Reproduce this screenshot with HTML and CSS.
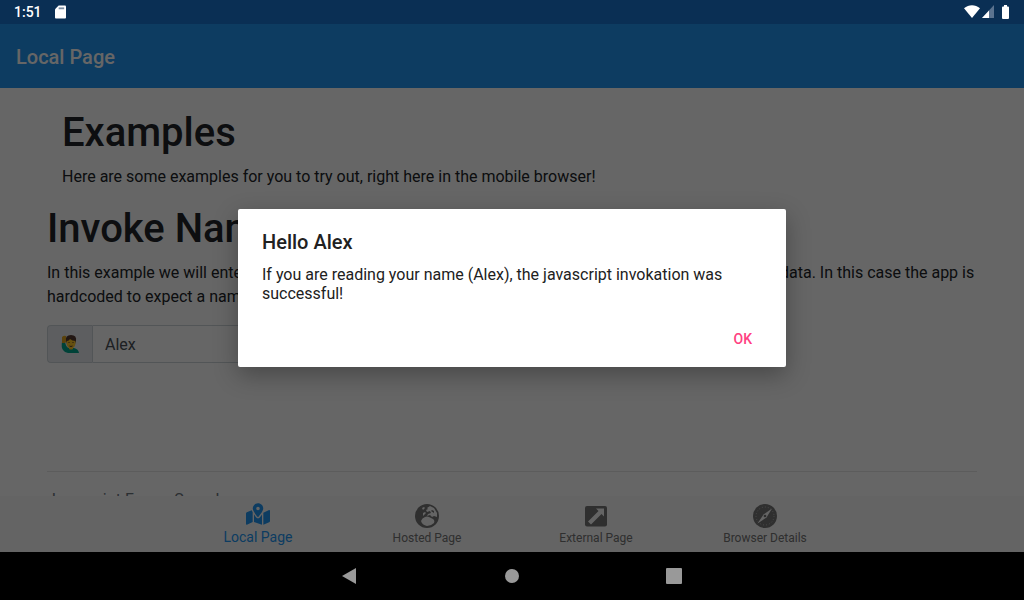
FILE: index.html
```
<!DOCTYPE html>
<html lang="en">
<head>
<meta charset="utf-8">
<meta name="viewport" content="width=device-width, initial-scale=1">
<title>Local Page</title>
<link rel="stylesheet" href="styles.css">
</head>
<body>
<div class="screen">
  <div class="status-bar">
    <span class="clock">1:51</span>
    <svg class="sd-card" viewBox="0 0 12 14" aria-hidden="true"><path fill="#fff" d="M4 0h7q1 0 1 1v12q0 1-1 1H1q-1 0-1-1V4z"/><path fill="#7b8da3" d="M4 2h6v2H4z"/></svg>
    <div class="signals">
      <svg class="wifi" viewBox="0 0 16 13" aria-hidden="true"><path fill="#fff" d="M0 3.2C4.8-.8 11.2-.8 16 3.2L8 13z"/></svg>
      <svg class="cell" viewBox="0 0 12 13" aria-hidden="true"><path fill="#5b738f" d="M12 0v13H0z"/><path fill="#fff" d="M7 5.4V13H0z"/></svg>
      <svg class="battery" viewBox="0 0 7 14" aria-hidden="true"><path fill="#fff" d="M2 0h3v1.500h1q1 0 1 1V13q0 1-1 1H1q-1 0-1-1V2.500q0-1 1-1h1z"/></svg>
    </div>
  </div>

  <div class="app">
    <header class="toolbar"><h1 class="toolbar-title">Local Page</h1></header>

    <main class="content">
      <section class="intro">
        <h2 class="heading">Examples</h2>
        <p class="text">Here are some examples for you to try out, right here in the mobile browser!</p>
      </section>
      <section>
        <h2 class="heading">Invoke Name</h2>
        <p class="text">In this example we will enter our name, push the button and let the app show a native alert with entered data. In this case the app is hardcoded to expect a name.</p>
        <div class="input-group">
          <label class="addon" for="name" aria-label="Name">
            <svg class="person" viewBox="0 0 18 18" aria-hidden="true">
              <path fill="#00a58d" d="M1 7q-1 5 1 8 2 3 5 3h11q-.5-4-5-5H8q-3-.5-4-6z"/>
              <path fill="#e0a51f" d="M1 2q2-2 4-1l1 5-2 2H1z"/>
              <path fill="#543930" d="M5 6q-1-6 5-6t5 6l-1 3H6z"/>
              <ellipse cx="10" cy="8" rx="4.500" ry="5.500" fill="#ffc828"/>
              <path fill="#543930" d="M6 5q0-3 4-3t4.500 4Q11 6 9 4 8 6 6 6z"/>
              <path fill="none" stroke="#543930" d="M7.500 7.500h1m3 0h1M8.500 11q1.500 1 3 0"/>
              <path fill="#ffc828" d="M8 12h4v2q-2 1-4 0z"/>
            </svg>
          </label>
          <input class="name-input" id="name" type="text" value="Alex">
        </div>
      </section>
      <hr class="rule">
      <p class="text muted">Javascript Forms Sample</p>
    </main>

    <nav class="tabs">
      <a class="tab active" href="#local">
        <svg class="icon" viewBox="0 -32 576 576" aria-hidden="true"><path d="M288 0c-69.590 0-126 56.410-126 126 0 56.260 82.350 158.800 113.900 196.020 6.390 7.540 17.820 7.540 24.200 0C331.650 284.800 414 182.260 414 126 414 56.410 357.590 0 288 0zm0 168c-23.200 0-42-18.800-42-42s18.800-42 42-42 42 18.800 42 42-18.800 42-42 42zM20 216A32 32 0 0 0 0 246v250c0 11 11 19 22 15l138-63V215c-9-16-16-32-21-47zM288 360c-14 0-27-6-37-17-19-23-40-50-59-77v182l192 64V266c-19 27-40 54-59 77-10 11-23 17-37 17zm266-199L416 224v288l140-56a32 32 0 0 0 20-30V176c0-11-11-19-22-15z"/></svg>
        <span>Local Page</span>
      </a>
      <a class="tab" href="#hosted">
        <svg class="icon" viewBox="0 0 24 24" aria-hidden="true"><circle cx="12" cy="12" r="12"/><path class="cut" d="M7 4l2-1 1 1-2 2zM12 4l3-2 4 2 3 5v4l-3-1-2 1-2-2-3 1 1-2 3-1-1-2-3 1-1-2 2-1zM17 6l-1 1 3 2v-2zM6 17q1-3 4-4 2-1 4 0l4 2q2 1 1 4-3 3-7 3-5-1-6-5zM8 9l2-1 1 1-3 3z"/></svg>
        <span>Hosted Page</span>
      </a>
      <a class="tab" href="#external">
        <svg class="icon" viewBox="0 0 24 24" aria-hidden="true"><rect x="1" y="2" width="22" height="20.500" rx="2"/><path class="cut" d="M12 4.500h8v8l-2.500-2.500L7 20.500l-3-3L14.500 7z"/></svg>
        <span>External Page</span>
      </a>
      <a class="tab" href="#browser">
        <svg class="icon" viewBox="0 0 24 24" aria-hidden="true"><circle cx="12" cy="12" r="12"/><circle class="ticks" cx="12" cy="12" r="9"/><path class="cut" d="M19 4.500L13.500 13.500 4.500 19.500 10.500 10.500z"/><circle cx="12" cy="12" r="1.300"/></svg>
        <span>Browser Details</span>
      </a>
    </nav>

    <div class="scrim">
      <div class="dialog" role="alertdialog" aria-labelledby="dialog-title" aria-describedby="dialog-text">
        <h2 class="dialog-title" id="dialog-title">Hello Alex</h2>
        <p class="dialog-text" id="dialog-text">If you are reading your name (Alex), the javascript invokation was successful!</p>
        <div class="dialog-actions"><button class="dialog-button" type="button">OK</button></div>
      </div>
    </div>
  </div>

  <div class="system-nav">
    <button class="system-button" type="button" aria-label="Back"><svg class="system-icon" viewBox="0 0 16 16"><path d="M14 0v16L0 8z"/></svg></button>
    <button class="system-button" type="button" aria-label="Home"><svg class="system-icon" viewBox="0 0 16 16"><circle cx="8" cy="8" r="7"/></svg></button>
    <button class="system-button" type="button" aria-label="Recent apps"><svg class="system-icon" viewBox="0 0 16 16"><rect width="16" height="16" rx="1"/></svg></button>
  </div>
</div>
</body>
</html>
```
FILE: styles.css
```
* { box-sizing: border-box; }
body { margin: 0; font-family: Roboto, "Liberation Sans", sans-serif; }
h1, h2, p { margin: 0; }
svg { display: block; }
button { border: 0; padding: 0; background: none; font: inherit; }

.screen { display: flex; flex-direction: column; height: 100vh; overflow: hidden; }

.status-bar {
  display: flex;
  align-items: center;
  height: 24px;
  padding: 0 15px 1px 14px;
  background: #0a2f54;
  color: #fff;
}
.clock { font-size: 14px; font-weight: 500; line-height: 24px; margin-right: 13px; }
.sd-card { width: 11px; height: 14px; }
.signals { display: flex; align-items: center; margin-left: auto; }
.wifi { width: 16px; height: 13px; }
.cell { width: 12px; height: 13px; margin: 0 8px 0 2px; }
.battery { width: 7px; height: 14px; }

.app { position: relative; flex: 1; min-height: 0; display: flex; flex-direction: column; background: #fff; }
.toolbar { display: flex; align-items: center; height: 64px; padding: 2px 16px 0; background: #2196f3; color: #fff; }
.toolbar-title { font-size: 20px; font-weight: 500; line-height: 24px; }

.content { flex: 1; min-height: 0; overflow: hidden; padding: 21px 47px 0; color: #212529; }
.intro { padding: 0 15px; }
.heading { margin-bottom: 8px; font-size: 40px; font-weight: 500; line-height: 48px; }
.text { margin-bottom: 16px; font-size: 16px; line-height: 24px; }
.muted { color: #6c757d; }
.input-group { display: flex; max-width: 640px; height: 38px; }
.addon {
  display: flex;
  align-items: center;
  padding: 0 13px;
  border: 1px solid #ced4da;
  border-right: 0;
  border-radius: 4px 0 0 4px;
  background: #e9ecef;
}
.person { width: 18px; height: 18px; }
.name-input {
  flex: 1;
  min-width: 0;
  padding: 0 12px;
  border: 1px solid #ced4da;
  border-radius: 0 4px 4px 0;
  background: #fff;
  color: #495057;
  font: 16px Roboto, "Liberation Sans", sans-serif;
}
.rule { margin: 108px 0 16px; border: 0; border-top: 1px solid #e5e5e5; }

.tabs { display: flex; justify-content: center; height: 56px; padding-right: 1px; background: #fafafa; }
.tab {
  display: flex;
  flex: 0 1 169px;
  flex-direction: column;
  align-items: center;
  padding-top: 8px;
  color: #757575;
  font-size: 12px;
  line-height: 20px;
  text-decoration: none;
  white-space: nowrap;
}
.tab.active { padding-top: 6px; color: #2196f3; font-size: 14px; line-height: 22px; }
.icon { width: 24px; height: 24px; fill: currentColor; }
.cut { fill: #fafafa; }
.ticks { fill: none; stroke: #bdbdbd; stroke-width: 1; stroke-dasharray: 1 2; }

.scrim {
  position: absolute;
  inset: 0;
  display: grid;
  place-items: center;
  background: rgba(0, 0, 0, 0.6);
}
.dialog {
  width: 100%;
  max-width: 548px;
  padding: 20px 24px 10px;
  border-radius: 2px;
  background: #fff;
  color: #212121;
  box-shadow: 0 8px 24px rgba(0, 0, 0, 0.3);
}
.dialog-title { font-size: 20px; font-weight: 500; line-height: 26px; }
.dialog-text { margin-top: 10px; font-size: 16px; line-height: 19px; }
.dialog-actions { display: flex; justify-content: flex-end; margin-top: 18px; }
.dialog-button { height: 36px; padding: 0 10px; color: #ff4081; font-size: 14px; font-weight: 500; }

.system-nav { display: flex; justify-content: center; height: 48px; background: #000; }
.system-button { display: grid; place-items: center; flex: 0 1 162px; }
.system-icon { width: 16px; height: 16px; fill: #999; }
```
